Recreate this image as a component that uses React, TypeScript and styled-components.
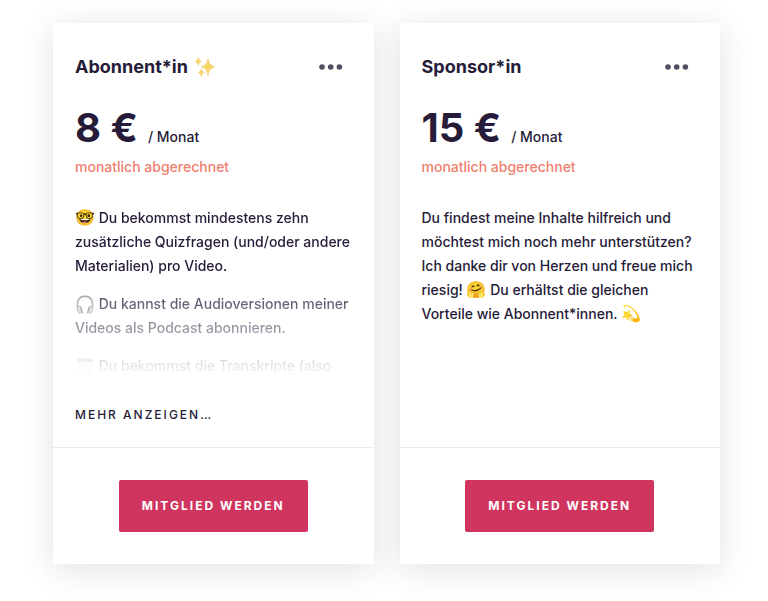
import React, { useState } from 'react';
import type { ReactNode } from 'react';
import styled, { createGlobalStyle } from 'styled-components';

const ink = '#261b38';

const GlobalStyle = createGlobalStyle`
  *, *::before, *::after { box-sizing: border-box; }
  body {
    margin: 0;
    background: #fff;
    color: ${ink};
    font-family: Inter, 'Liberation Sans', 'Noto Color Emoji', sans-serif;
    font-size: 14px;
    font-weight: 450;
    line-height: 24px;
  }
  button { font-family: inherit; color: inherit; cursor: pointer; }
`;

const Tiers = styled.main`
  display: grid;
  grid-template-columns: repeat(2, minmax(0, 1fr));
  gap: 26px;
  padding: 23px 48px 37px 53px;
`;

const Card = styled.article`
  display: flex;
  flex-direction: column;
  background: #fff;
  box-shadow: 0 5px 30px rgba(30, 30, 45, 0.13);
`;

const Body = styled.div`
  flex: 1;
  padding: 32px 22px 20px;
`;

const Header = styled.header`
  display: flex;
  align-items: center;
  justify-content: space-between;
`;

const Title = styled.h2`
  display: flex;
  align-items: center;
  gap: 7px;
  margin: 0;
  font-size: 18px;
  font-weight: 700;
  line-height: 24px;
`;

const MenuButton = styled.button`
  display: flex;
  padding: 9px;
  border: 0;
  background: none;
  color: #554d62;
`;

const Price = styled.p`
  display: flex;
  align-items: baseline;
  gap: 10px;
  margin: 25px 0 0;
`;

const Amount = styled.strong`
  font-size: 40px;
  font-weight: 700;
  line-height: 48px;
`;

const Billing = styled.p`
  margin: 3px 0 0;
  color: #f0806f;
`;

const Description = styled.div<{ $faded: boolean }>`
  display: flex;
  flex-direction: column;
  gap: 14px;
  margin-top: 27px;
  ${p => p.$faded && 'mask-image: linear-gradient(#000 38%, transparent 100%);'}

  p { margin: 0; }
`;

const Emoji = styled.span`
  font-size: 16px;
  line-height: 16px;
`;

const Glyph = styled.svg`
  width: 20px;
  height: 20px;
  vertical-align: middle;
`;

const MoreButton = styled.button`
  display: block;
  margin-top: 25px;
  padding: 0;
  border: 0;
  background: none;
  font-size: 12px;
  font-weight: 450;
  line-height: 24px;
  letter-spacing: 2px;
  text-transform: uppercase;
`;

const Footer = styled.footer`
  display: flex;
  justify-content: center;
  padding: 32px 22px;
  border-top: 1px solid #ebebf3;
`;

const JoinButton = styled.button`
  padding: 14px 23px;
  border: 0;
  border-radius: 2px;
  background: #cf355f;
  && { color: #fff; }
  font-size: 12px;
  font-weight: 700;
  line-height: 24px;
  letter-spacing: 2px;
  text-transform: uppercase;
`;

function Sparkles() {
  return (
    <Glyph viewBox="0 0 20 20" fill="#f9d766" stroke="#f3c063" strokeWidth="0.4" role="img" aria-label="Funkeln">
      <path d="M13 1.200Q13.900 8.600 20 9.800Q13.900 11 13 18.800Q12.100 11 6.200 9.800Q12.100 8.600 13 1.200z" />
      <path d="M3.300.4Q3.800 3.800 6.600 4.400Q3.800 5 3.300 8.600Q2.800 5 0 4.400Q2.800 3.800 3.300.4z" />
      <path d="M6.300 11.800Q6.800 15 9.400 15.600Q6.800 16.200 6.300 19.800Q5.800 16.200 3.200 15.600Q5.800 15 6.300 11.800z" />
    </Glyph>
  );
}

function Headphones() {
  return (
    <Glyph viewBox="0 0 20 20" fill="none" role="img" aria-label="Kopfhörer">
      <path d="M3.2 13.5C1.6 9.5 2 1.4 10 1.4s8.400 8.100 6.800 12.100" stroke="#8d8d90" strokeWidth="1.800" />
      <path d="M3.700 12.500C2.300 8.500 3.400 2.300 10 2.300s7.700 6.200 6.300 10.200" stroke="#dcdcde" strokeWidth="0.900" />
      <rect x="2.600" y="11" width="3.400" height="7.400" rx="1.700" transform="rotate(-16 4.300 14.700)" fill="#d4d4d6" stroke="#8d8d90" strokeWidth="0.700" />
      <rect x="14" y="11" width="3.400" height="7.400" rx="1.700" transform="rotate(16 15.700 14.700)" fill="#d4d4d6" stroke="#8d8d90" strokeWidth="0.700" />
      <path d="M5.800 11.800l1.600 6.200M14.200 11.800l-1.600 6.200" stroke="#77777a" strokeWidth="1.100" strokeLinecap="round" />
    </Glyph>
  );
}

function Notepad() {
  return (
    <Glyph viewBox="0 0 20 20" fill="none" role="img" aria-label="Notizblock">
      <path d="M2 2h16v11.500L13.500 19H2z" fill="#e2e9e9" />
      <path d="M2 2h16v3H2z" fill="#b4b4b7" />
      <path d="M4 1v4M6.400 1v4M8.800 1v4M11.200 1v4M13.600 1v4M16 1v4" stroke="#7b7b7f" strokeWidth="0.900" />
      <path d="M18 13.500L13.500 19l-.8-.6 1-4z" fill="#8b9090" />
    </Glyph>
  );
}

interface Tier {
  name: string;
  icon?: ReactNode;
  amount: string;
  perks: ReactNode[];
  collapsible?: boolean;
}

const tiers: Tier[] = [
  {
    name: 'Abonnent*in',
    icon: <Sparkles />,
    amount: '8 €',
    perks: [
      <><Emoji>🤓</Emoji> Du bekommst mindestens zehn zusätzliche Quizfragen (und/oder andere Materialien) pro Video.</>,
      <><Headphones /> Du kannst die Audioversionen meiner Videos als Podcast abonnieren.</>,
      <><Notepad /> Du bekommst die Transkripte (also</>,
    ],
    collapsible: true,
  },
  {
    name: 'Sponsor*in',
    amount: '15 €',
    perks: [
      <>
        Du findest meine Inhalte hilfreich und möchtest mich noch mehr unterstützen? Ich danke dir von
        Herzen und freue mich riesig! <Emoji>🤗</Emoji> Du erhältst die gleichen Vorteile wie
        Abonnent*innen. <Emoji>💫</Emoji>
      </>,
    ],
  },
];

function TierCard({ tier }: { tier: Tier }) {
  const [collapsed, setCollapsed] = useState(Boolean(tier.collapsible));
  return (
    <Card>
      <Body>
        <Header>
          <Title>{tier.name}{tier.icon}</Title>
          <MenuButton type="button" aria-label={`Optionen für ${tier.name}`}>
            <svg width="24" height="6" viewBox="0 0 24 6" fill="currentColor" aria-hidden="true">
              <circle cx="3" cy="3" r="2.8" />
              <circle cx="11.7" cy="3" r="2.8" />
              <circle cx="20.4" cy="3" r="2.8" />
            </svg>
          </MenuButton>
        </Header>
        <Price>
          <Amount>{tier.amount}</Amount>
          <span>/ Monat</span>
        </Price>
        <Billing>monatlich abgerechnet</Billing>
        <Description $faded={collapsed}>
          {tier.perks.map((perk, index) => <p key={index}>{perk}</p>)}
        </Description>
        {collapsed && (
          <MoreButton type="button" onClick={() => setCollapsed(false)}>Mehr anzeigen…</MoreButton>
        )}
      </Body>
      <Footer>
        <JoinButton type="button">Mitglied werden</JoinButton>
      </Footer>
    </Card>
  );
}

export default function App() {
  return (
    <>
      <GlobalStyle />
      <Tiers>
        {tiers.map(tier => <TierCard key={tier.name} tier={tier} />)}
      </Tiers>
    </>
  );
}
